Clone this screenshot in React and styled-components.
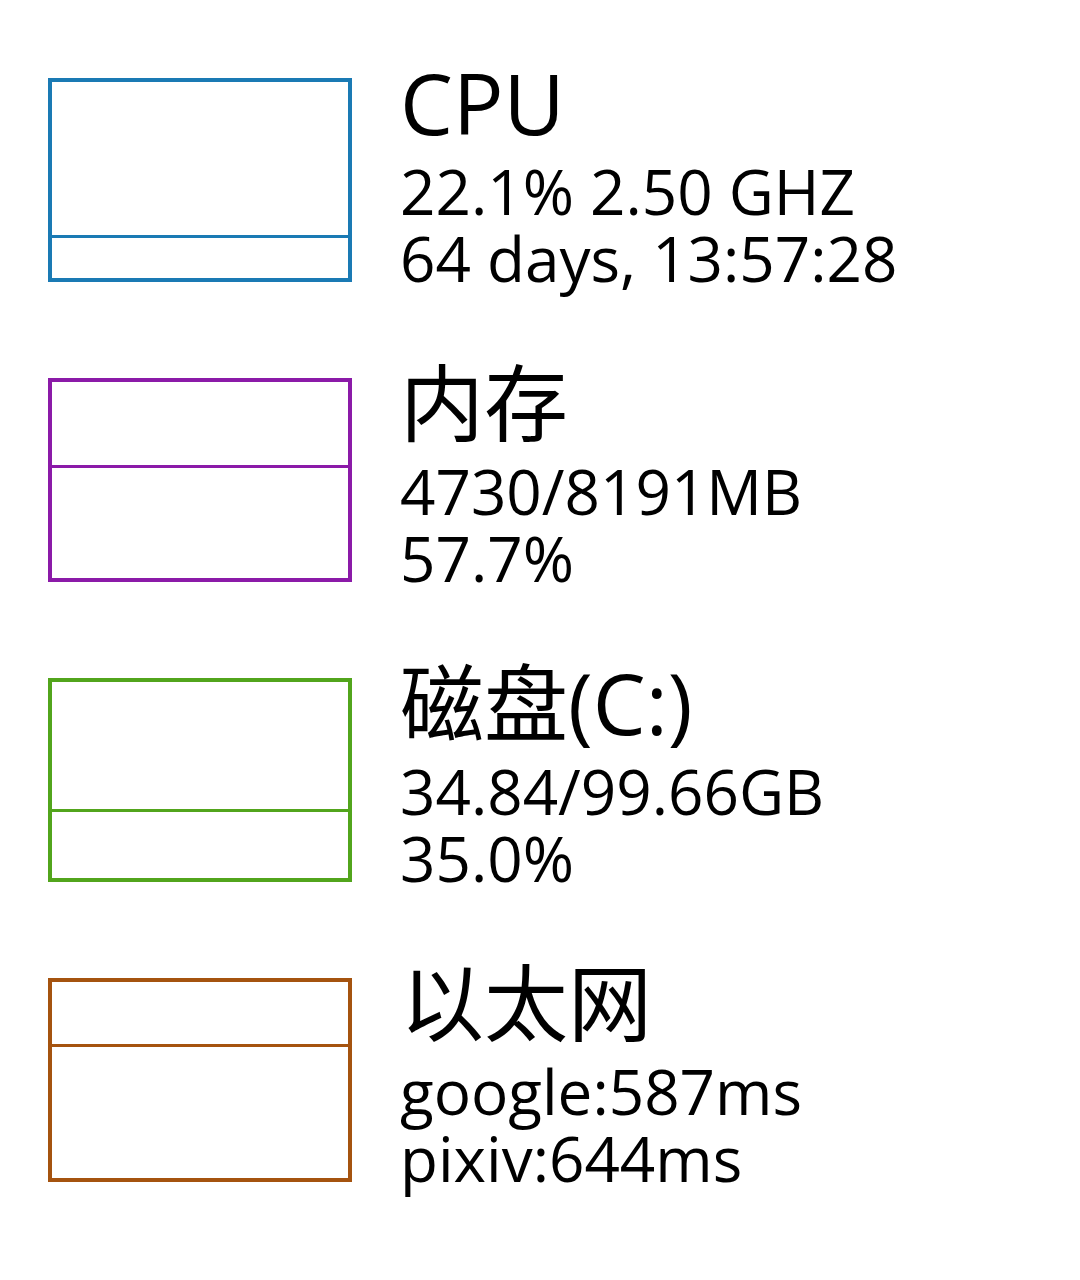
import React from 'react';
import styled, { createGlobalStyle } from 'styled-components';

const GlobalStyle = createGlobalStyle`
  html, body {
    margin: 0;
    padding: 0;
    background: #ffffff;
  }
  body {
    font-family: "Open Sans", "Noto Sans CJK SC", sans-serif;
    color: #000000;
  }
`;

const Page = styled.div`
  display: flex;
  flex-direction: column;
  gap: 96px;
  min-height: 1280px;
  box-sizing: border-box;
  padding: 78px 0 98px 48px;
`;

const Row = styled.div`
  display: flex;
  flex-direction: row;
  align-items: flex-start;
  gap: 48px;
  height: 204px;
`;

const Graph = styled.div`
  width: 304px;
  height: 204px;
  flex-shrink: 0;
  box-sizing: border-box;
  border: 4px solid ${(props) => props.color};
  display: flex;
  flex-direction: column;
  justify-content: flex-end;
`;

const Usage = styled.div`
  box-sizing: border-box;
  border-top: 3px solid ${(props) => props.color};
`;

const Info = styled.div`
  display: flex;
  flex-direction: column;
  margin-top: -31px;
`;

const Title = styled.div`
  font-size: 84px;
  line-height: 111px;
  white-space: nowrap;
`;

const Detail = styled.div`
  font-size: 62px;
  line-height: 67px;
  white-space: nowrap;
`;

const items = [
  { title: 'CPU', color: '#1a7ab4', pct: 22.1, lines: ['22.1% 2.50 GHZ', '64 days, 13:57:28'] },
  { title: '内存', color: '#8b1aa8', pct: 57.7, lines: ['4730/8191MB', '57.7%'] },
  { title: '磁盘(C:)', color: '#52a51c', pct: 35.0, lines: ['34.84/99.66GB', '35.0%'] },
  { title: '以太网', color: '#a5530f', pct: 68.4, lines: ['google:587ms', 'pixiv:644ms'] },
];

const App = () => {
  return (
    <>
      <GlobalStyle />
      <Page>
        {items.map((item) => (
          <Row key={item.title}>
            <Graph color={item.color}>
              <Usage color={item.color} style={{ height: `${item.pct}%` }} />
            </Graph>
            <Info>
              <Title>{item.title}</Title>
              {item.lines.map((line) => (
                <Detail key={line}>{line}</Detail>
              ))}
            </Info>
          </Row>
        ))}
      </Page>
    </>
  );
};

export default App;
